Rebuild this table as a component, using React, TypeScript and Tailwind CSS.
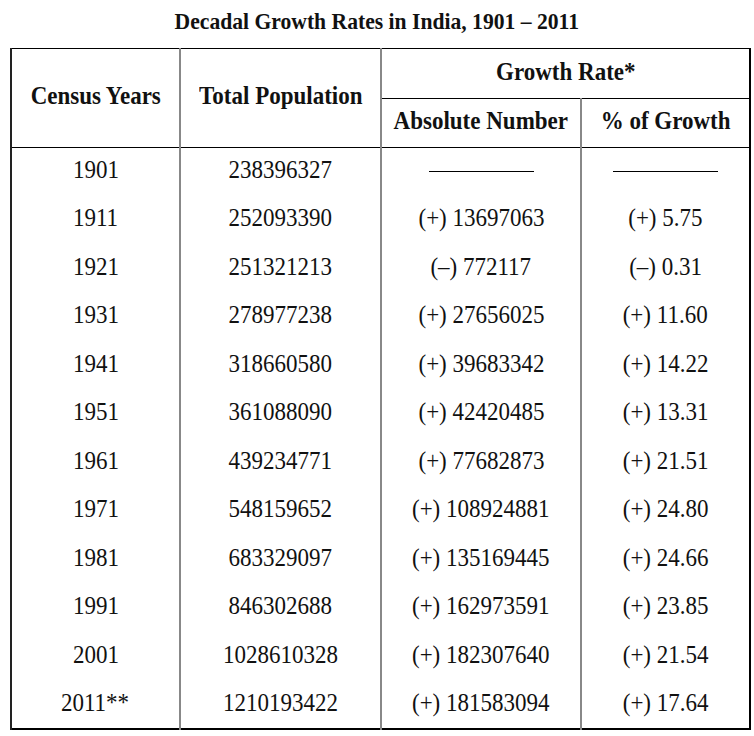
const rows = [
  ["1901", "238396327", "", ""],
  ["1911", "252093390", "(+) 13697063", "(+) 5.75"],
  ["1921", "251321213", "(–) 772117", "(–) 0.31"],
  ["1931", "278977238", "(+) 27656025", "(+) 11.60"],
  ["1941", "318660580", "(+) 39683342", "(+) 14.22"],
  ["1951", "361088090", "(+) 42420485", "(+) 13.31"],
  ["1961", "439234771", "(+) 77682873", "(+) 21.51"],
  ["1971", "548159652", "(+) 108924881", "(+) 24.80"],
  ["1981", "683329097", "(+) 135169445", "(+) 24.66"],
  ["1991", "846302688", "(+) 162973591", "(+) 23.85"],
  ["2001", "1028610328", "(+) 182307640", "(+) 21.54"],
  ["2011**", "1210193422", "(+) 181583094", "(+) 17.64"],
]

// the source is a slightly condensed scan, so squeeze the glyphs a bit
function T({ children }: { children: React.ReactNode }) {
  return <span className="inline-block scale-x-[0.92] whitespace-nowrap">{children}</span>
}

function Dash() {
  return <div className="mx-auto h-px w-[105px] bg-black translate-y-[2px]" />
}

export default function App() {
  return (
    <div className="w-[754px] h-[736px] bg-white text-[#111] font-['Liberation_Serif',serif]">
      <div className="h-[48px] flex items-center justify-center pb-[5px]">
        <h1 className="text-[23.5px] font-bold leading-none"><T>Decadal Growth Rates in India, 1901 – 2011</T></h1>
      </div>
      <table className="ml-[10px] w-[739px] border-collapse table-fixed text-center text-[25px] leading-none [&_td]:pb-[5px] [&_th]:pb-[5px]">
        <colgroup>
          <col className="w-[169px]" />
          <col className="w-[201px]" />
          <col className="w-[200px]" />
          <col className="w-[169px]" />
        </colgroup>
        <thead className="font-bold">
          <tr className="h-[50px]">
            <th rowSpan={2} className="border-t border-b border-t-black border-b-black border-l-2 border-l-[#222] border-r-2 border-r-[#888] font-bold">
              <T>Census Years</T>
            </th>
            <th rowSpan={2} className="border-t border-b border-black border-r-2 border-r-[#888] font-bold">
              <T>Total Population</T>
            </th>
            <th colSpan={2} className="border-t border-b border-black border-r-2 border-r-black font-bold">
              <T>Growth Rate*</T>
            </th>
          </tr>
          <tr className="h-[49px]">
            <th className="border-b border-black border-r-2 border-r-[#888] font-bold"><T>Absolute Number</T></th>
            <th className="border-b border-black border-r-2 border-r-black font-bold"><T>% of Growth</T></th>
          </tr>
        </thead>
        <tbody>
          {rows.map((row, i) => (
            <tr key={row[0]} className={i === rows.length - 1 ? "h-[48px] border-b-2 border-black" : "h-[48.5px]"}>
              <td className="border-l-2 border-l-[#222] border-r-2 border-r-[#888]"><T>{row[0]}</T></td>
              <td className="border-r-2 border-r-[#888]"><T>{row[1]}</T></td>
              <td className="border-r-2 border-r-[#888]">{row[2] === "" ? <Dash /> : <T>{row[2]}</T>}</td>
              <td className="border-r-2 border-r-black">{row[3] === "" ? <Dash /> : <T>{row[3]}</T>}</td>
            </tr>
          ))}
        </tbody>
      </table>
    </div>
  )
}
